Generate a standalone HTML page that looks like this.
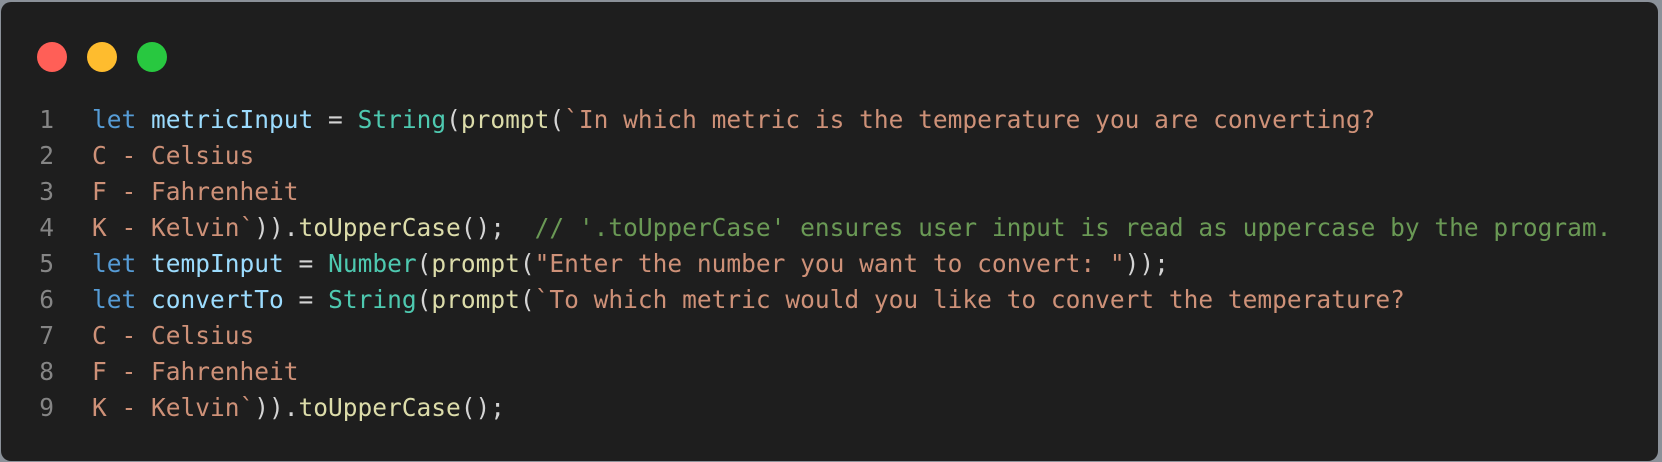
<!DOCTYPE html>
<html><head><style>
html,body{margin:0;padding:0;width:1662px;height:462px;background:#8b9199;overflow:hidden}
.win{position:absolute;left:1px;top:2px;width:1657px;height:459px;background:#1e1e1e;border-radius:10px}
.dot{position:absolute;top:40px;width:30px;height:30px;border-radius:50%}
pre{position:absolute;left:0;top:100px;margin:0;font-family:"DejaVu Sans Mono","Liberation Mono",monospace;font-size:24.5px;line-height:36px;color:#d4d4d4}
.n{display:inline-block;width:53px;text-align:right;color:#858585;margin-right:38px}
.k{color:#569cd6}.v{color:#9cdcfe}.t{color:#4ec9b0}.f{color:#dcdcaa}.s{color:#ce9178}.c{color:#6a9955}
</style></head><body>
<div class="win">
<div class="dot" style="left:36px;background:#ff5f57"></div>
<div class="dot" style="left:86px;background:#febc2e"></div>
<div class="dot" style="left:136px;background:#28c840"></div>
<pre><span class="n">1</span><span class="k">let</span> <span class="v">metricInput</span> = <span class="t">String</span>(<span class="f">prompt</span>(<span class="s">`In which metric is the temperature you are converting?</span>
<span class="n">2</span><span class="s">C - Celsius</span>
<span class="n">3</span><span class="s">F - Fahrenheit</span>
<span class="n">4</span><span class="s">K - Kelvin`</span>)).<span class="f">toUpperCase</span>();  <span class="c">// '.toUpperCase' ensures user input is read as uppercase by the program.</span>
<span class="n">5</span><span class="k">let</span> <span class="v">tempInput</span> = <span class="t">Number</span>(<span class="f">prompt</span>(<span class="s">"Enter the number you want to convert: "</span>));
<span class="n">6</span><span class="k">let</span> <span class="v">convertTo</span> = <span class="t">String</span>(<span class="f">prompt</span>(<span class="s">`To which metric would you like to convert the temperature?</span>
<span class="n">7</span><span class="s">C - Celsius</span>
<span class="n">8</span><span class="s">F - Fahrenheit</span>
<span class="n">9</span><span class="s">K - Kelvin`</span>)).<span class="f">toUpperCase</span>();</pre>
</div>
</body></html>
